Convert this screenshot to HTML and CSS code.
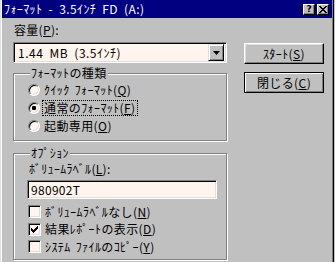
FILE: index.html
```html
<!DOCTYPE html>
<html lang="ja">
<head>
<meta charset="utf-8">
<link rel="stylesheet" href="styles.css">
</head>
<body>
<div class="window">
  <div class="titlebar">
    <span class="title">ﾌｫｰﾏｯﾄ - 3.5ｲﾝﾁ FD (A:)</span>
    <div class="tbtns">
      <span class="tbtn">?</span>
      <span class="tbtn">
        <svg width="8" height="7" viewBox="0 0 8 7"><path d="M0 0h2v1h1v1h2v-1h1v-1h2v1h-1v1h-1v1h-1v1h1v1h1v1h1v1h-2v-1h-1v-1h-2v1h-1v1h-2v-1h1v-1h1v-1h1v-1h-1v-1h-1v-1h-1z" fill="#000"/></svg>
      </span>
    </div>
  </div>
  <div class="body">
    <div class="left">
      <div class="label cap">容量(<u>P</u>):</div>
      <div class="combo">
        <span class="combo-text">1.44 MB (3.5ｲﾝﾁ)</span>
        <span class="combo-btn"><svg width="7" height="4" viewBox="0 0 7 4"><path d="M0 0h7l-3.5 4z" fill="#000"/></svg></span>
      </div>
      <fieldset class="group g1">
        <legend>ﾌｫｰﾏｯﾄの種類</legend>
        <div class="opt"><span class="radio"></span><span class="txt">ｸｲｯｸ ﾌｫｰﾏｯﾄ(<u>Q</u>)</span></div>
        <div class="opt"><span class="radio on"></span><span class="txt focus">通常のﾌｫｰﾏｯﾄ(<u>F</u>)</span></div>
        <div class="opt"><span class="radio"></span><span class="txt">起動専用(<u>O</u>)</span></div>
      </fieldset>
      <fieldset class="group g2">
        <legend>ｵﾌﾟｼｮﾝ</legend>
        <div class="label vol">ﾎﾞﾘｭｰﾑﾗﾍﾞﾙ(<u>L</u>):</div>
        <div class="textbox">980902T</div>
        <div class="opt chk"><span class="check"></span><span class="txt">ﾎﾞﾘｭｰﾑﾗﾍﾞﾙなし(<u>N</u>)</span></div>
        <div class="opt chk"><span class="check"><svg width="7" height="7" viewBox="0 0 7 7"><path d="M0 2h1v1h1v1h1v-1h1v-1h1v-1h1v-1h1v3h-1v1h-1v1h-1v1h-1v1h-1v-1h-1v-1h-1z" fill="#000"/></svg></span><span class="txt">結果ﾚﾎﾟｰﾄの表示(<u>D</u>)</span></div>
        <div class="opt chk"><span class="check"></span><span class="txt">ｼｽﾃﾑ ﾌｧｲﾙのｺﾋﾟｰ(<u>Y</u>)</span></div>
      </fieldset>
    </div>
    <div class="right">
      <div class="btn">ｽﾀｰﾄ(<u>S</u>)</div>
      <div class="btn default">閉じる(<u>C</u>)</div>
    </div>
  </div>
</div>
</body>
</html>
```
FILE: styles.css
```css
* { box-sizing: border-box; }
html, body { margin: 0; padding: 0; background: #c0c0c0; }
body {
  font-family: "Noto Sans CJK JP", "DejaVu Sans", sans-serif;
  font-size: 12px;
  color: #000;
}
u { text-decoration: underline; text-underline-offset: 1px; }
.window {
  width: 334px;
  height: 262px;
  background: #c0c0c0;
  border-left: 1px solid #dfdfdf;
  border-right: 1px solid #000;
  box-shadow: inset 1px 0 0 #fff, inset -1px 0 0 #808080;
  overflow: hidden;
}
.titlebar {
  height: 18px;
  margin: 0 1px 0 1px;
  background: #000080;
  color: #fff;
  display: flex;
  align-items: center;
  justify-content: space-between;
  padding: 0 3px 0 2px;
}
.title { line-height: 16px; white-space: nowrap; letter-spacing: 0.4px; word-spacing: 3px; }
.tbtns { display: flex; gap: 2px; }
.tbtn {
  width: 12px; height: 11px;
  background: #c0c0c0;
  color: #000;
  font-family: "DejaVu Sans", sans-serif;
  font-weight: bold;
  font-size: 9px;
  line-height: 9px;
  display: flex; align-items: center; justify-content: center;
  border-top: 1px solid #fff; border-left: 1px solid #fff;
  border-right: 1px solid #000; border-bottom: 1px solid #000;
  box-shadow: inset -1px -1px 0 #808080;
}
.body { display: flex; padding: 4px 0 0 12px; }
.left { width: 215px; }
.right { margin-left: 16px; display: flex; flex-direction: column; gap: 8px; padding-top: 21px; }
.label { line-height: 16px; padding-left: 1px; letter-spacing: 0.3px; }
.combo {
  margin-top: 4px;
  width: 214px; height: 21px;
  background: #fff5ee;
  border-top: 1px solid #808080; border-left: 1px solid #808080;
  border-right: 1px solid #fff; border-bottom: 1px solid #fff;
  box-shadow: inset 1px 1px 0 #000, inset -1px -1px 0 #dfdfdf;
  display: flex; align-items: center; justify-content: space-between;
  padding: 0 2px 0 4px;
}
.combo-text { line-height: 16px; letter-spacing: 0.5px; word-spacing: 3px; }
.combo-btn {
  width: 16px; height: 17px;
  background: #c0c0c0;
  border-top: 1px solid #dfdfdf; border-left: 1px solid #dfdfdf;
  border-right: 1px solid #000; border-bottom: 1px solid #000;
  box-shadow: inset 1px 1px 0 #fff, inset -1px -1px 0 #808080;
  display: flex; align-items: center; justify-content: center;
}
.group {
  margin: 3px 0 0 0;
  padding: 1px 4px 4px 14px;
  border: 1px solid #808080;
  box-shadow: inset 1px 1px 0 #fff, 1px 1px 0 #fff;
  width: 214px;
  min-width: 0;
}
.group legend {
  background: #c0c0c0;
  padding: 0 1px 0 1px;
  margin-left: 2px;
  line-height: 14px;
  letter-spacing: 0.4px;
}
.g1 { height: 75px; }
.g2 { margin-top: 5px; height: 114px; }
.opt { display: flex; align-items: center; height: 18px; }
.radio {
  width: 12px; height: 12px;
  border-radius: 50%;
  background: #fff5ee;
  border: 1px solid;
  border-color: #808080 #fff #fff #808080;
  box-shadow: inset 1px 1px 0 #000, inset -1px -1px 0 #dfdfdf;
  margin-right: 4px;
  flex: none;
  display: flex; align-items: center; justify-content: center;
}
.radio.on::after {
  content: "";
  width: 4px; height: 4px;
  background: #000;
  border-radius: 1px;
}
.txt { line-height: 14px; white-space: nowrap; letter-spacing: 0.4px; word-spacing: 2px; }
.focus { outline: 1px dotted #000; outline-offset: 0; padding: 0 1px; margin-left: -1px; }
.vol { margin-top: 0; }
.textbox {
  margin: 3px 0 4px -1px;
  width: 190px; height: 19px;
  background: #fff5ee;
  border-top: 1px solid #808080; border-left: 1px solid #808080;
  border-right: 1px solid #fff; border-bottom: 1px solid #fff;
  box-shadow: inset 1px 1px 0 #000, inset -1px -1px 0 #dfdfdf;
  padding: 0 3px;
  line-height: 17px;
  letter-spacing: 0.3px;
}
.chk { height: 17.5px; }
.check {
  width: 13px; height: 13px;
  background: #fff5ee;
  border-top: 1px solid #808080; border-left: 1px solid #808080;
  border-right: 1px solid #fff; border-bottom: 1px solid #fff;
  box-shadow: inset 1px 1px 0 #000, inset -1px -1px 0 #dfdfdf;
  margin-right: 4px;
  flex: none;
  display: flex; align-items: center; justify-content: center;
}
.btn {
  width: 80px; height: 21px;
  background: #c0c0c0;
  border-top: 1px solid #fff; border-left: 1px solid #fff;
  border-right: 1px solid #000; border-bottom: 1px solid #000;
  box-shadow: inset -1px -1px 0 #808080, inset 1px 1px 0 #dfdfdf;
  display: flex; align-items: center; justify-content: center;
  line-height: 14px;
  letter-spacing: 0.4px;
}
.btn.default {
  border: 1px solid #000;
  box-shadow: inset 1px 1px 0 #fff, inset -1px -1px 0 #808080;
}
```
